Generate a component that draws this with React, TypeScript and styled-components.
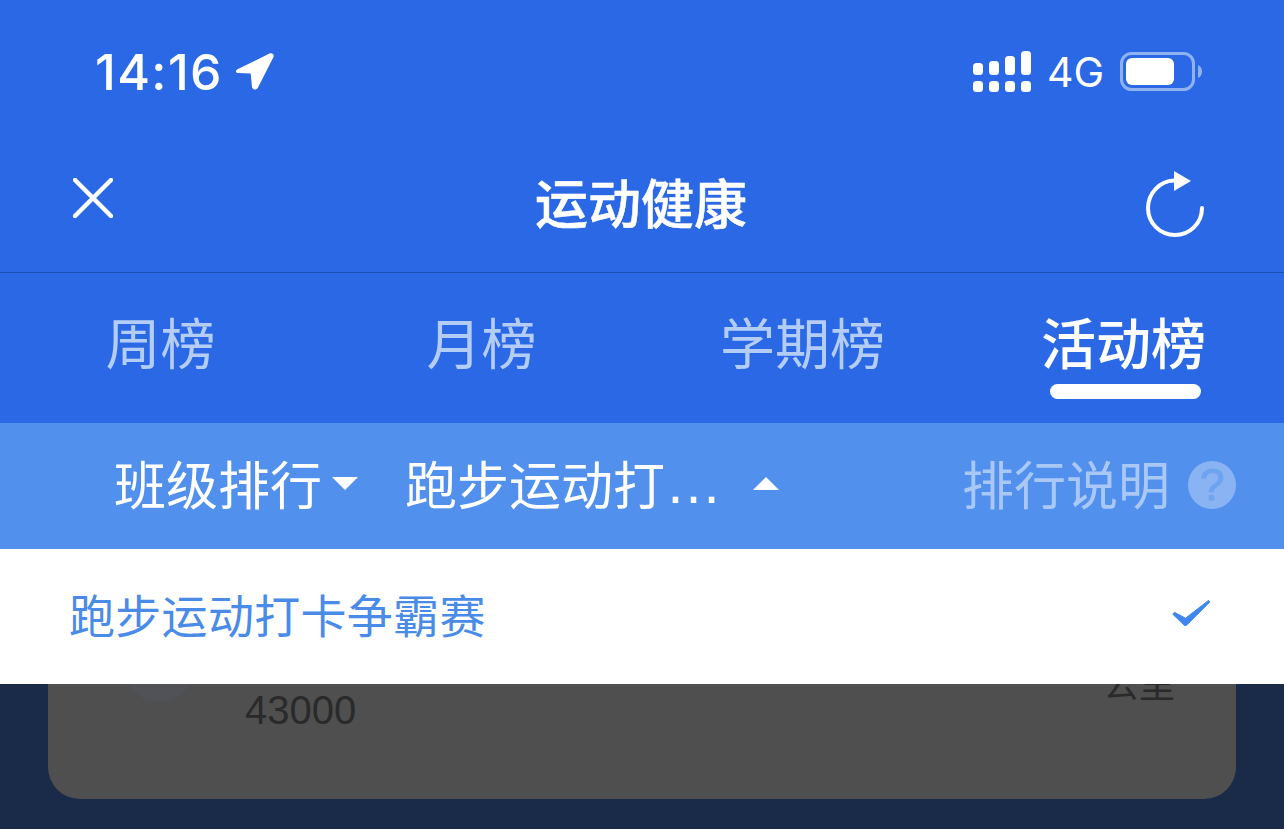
import React from 'react';
import styled, { createGlobalStyle } from 'styled-components';

const CJK = `"Noto Sans CJK SC", "Liberation Sans", sans-serif`;

const GlobalStyle = createGlobalStyle`
  html, body {
    margin: 0;
    padding: 0;
    height: 100%;
    background: #192b48;
  }
  #root {
    height: 100%;
  }
`;

const Page = styled.div`
  width: 1284px;
  height: 829px;
  display: flex;
  flex-direction: column;
  overflow: hidden;
  font-family: ${CJK};
`;

const Header = styled.header`
  background: #2b68e6;
  color: #fff;
`;

const StatusBar = styled.div`
  height: 140px;
  box-sizing: border-box;
  padding: 51px 82px 0 95px;
  display: flex;
  justify-content: space-between;
  align-items: flex-start;
`;

const StatusLeft = styled.div`
  display: flex;
  align-items: center;
  gap: 12px;
  height: 42px;
`;

const Time = styled.span`
  font-family: Inter, sans-serif;
  font-size: 50px;
  font-weight: 500;
  line-height: 42px;
  letter-spacing: 1.4px;
`;

const StatusRight = styled.div`
  display: flex;
  align-items: center;
  height: 41px;
`;

const Network = styled.span`
  font-family: Inter, sans-serif;
  font-size: 41px;
  font-weight: 400;
  line-height: 41px;
  margin: 2px 16px 0 16px;
`;

const NavBar = styled.div`
  height: 133px;
  box-sizing: border-box;
  padding: 0 80px 0 73px;
  border-bottom: 1px solid #1d4fb5;
  display: grid;
  grid-template-columns: 462px auto 1fr;
  align-items: center;
`;

const NavTitle = styled.h1`
  margin: 0 0 10px;
  font-size: 53px;
  font-weight: 500;
  line-height: 60px;
  -webkit-text-stroke: 0.5px #fff;
`;

const CloseIcon = styled.svg`
  margin-bottom: 16px;
`;

const RefreshIcon = styled.svg`
  justify-self: end;
  margin: 0 -1px 4px 0;
`;

const Tabs = styled.nav`
  height: 150px;
  display: grid;
  grid-template-columns: repeat(4, 321px);
`;

const Tab = styled.div<{ $active?: boolean }>`
  position: relative;
  text-align: center;
  padding-top: 32px;
  font-size: 55px;
  line-height: 70px;
  font-weight: ${p => (p.$active ? 500 : 400)};
  color: ${p => (p.$active ? '#ffffff' : '#b4cdf7')};
`;

const TabMark = styled.span`
  position: absolute;
  left: 87px;
  top: 111px;
  width: 151px;
  height: 15px;
  border-radius: 8px;
  background: #fff;
`;

const FilterBar = styled.div`
  height: 126px;
  box-sizing: border-box;
  background: #5290ee;
  padding: 0 48px 6px 114px;
  display: flex;
  align-items: center;
  justify-content: space-between;
  color: #fff;
  font-size: 52px;
  line-height: 70px;
`;

const FilterGroup = styled.div`
  display: flex;
  align-items: center;
  gap: 47px;
`;

const Filter = styled.div`
  display: flex;
  align-items: center;
  white-space: nowrap;
`;

const Dots = styled.span`
  font-family: "Liberation Sans", sans-serif;
  font-size: 57px;
`;

const Caret = styled.span<{ $up?: boolean; $gap: number }>`
  width: 0;
  height: 0;
  margin-left: ${p => p.$gap}px;
  margin-top: 1px;
  border-left: 13px solid transparent;
  border-right: 13px solid transparent;
  ${p => (p.$up ? 'border-bottom: 13px solid #fff;' : 'border-top: 13px solid #fff;')}
`;

const Rules = styled.div`
  display: flex;
  align-items: center;
  gap: 18px;
  color: #a9c8f6;
`;

const HelpBadge = styled.span`
  width: 48px;
  height: 48px;
  border-radius: 50%;
  background: #8ab3f4;
  color: #6ea3f0;
  font-family: "Liberation Sans", sans-serif;
  font-size: 44px;
  font-weight: 400;
  line-height: 48px;
  text-align: center;
  margin-top: 4px;
  -webkit-text-stroke: 1px #6ea3f0;
`;

const Body = styled.main`
  position: relative;
  flex: 1;
  padding: 0 48px;
`;

const Card = styled.section`
  height: 250px;
  box-sizing: border-box;
  background: #4f4f4f;
  border-radius: 0 0 32px 32px;
  display: flex;
  padding: 0 61px 0 76px;
  color: #2a2a2a;
`;

const Avatar = styled.div`
  width: 70px;
  height: 70px;
  margin-top: 83px;
  border-radius: 50%;
  background: #505258;
`;

const Steps = styled.div`
  margin: 138px 0 0 51px;
  flex: 1;
  font-family: "Liberation Sans", sans-serif;
  font-size: 40px;
  line-height: 46px;
`;

const Unit = styled.div`
  margin-top: 108px;
  font-size: 36px;
  line-height: 50px;
`;

const Dropdown = styled.div`
  position: absolute;
  left: 0;
  right: 0;
  top: 0;
  height: 135px;
  box-sizing: border-box;
  background: #fff;
  padding: 0 74px 8px 69px;
  display: flex;
  align-items: center;
  justify-content: space-between;
  color: #4a8be8;
  font-size: 46px;
  line-height: 60px;
  letter-spacing: 0.3px;
`;

const App: React.FC = () => (
  <Page>
    <GlobalStyle />
    <Header>
      <StatusBar>
        <StatusLeft>
          <Time>14:16</Time>
          <svg width="40" height="40" viewBox="0 0 40 40">
            <path
              d="M34.500 1.500 3 17C0 18.500.500 21 3 21L15.700 21.500 17 35C17.300 38 21.500 38.500 23 35.500L38.500 5C39.500 2.500 37 .300 34.500 1.500Z"
              fill="#fff"
            />
          </svg>
        </StatusLeft>
        <StatusRight>
          <svg width="58" height="41" viewBox="0 0 58 41" fill="#fff">
            <rect x="0" y="12" width="10" height="12" rx="3.5" />
            <rect x="16" y="10" width="10" height="14" rx="3.5" />
            <rect x="32" y="5" width="10" height="19" rx="3.5" />
            <rect x="48" y="0" width="10" height="24" rx="3.5" />
            <rect x="0" y="30" width="10" height="11" rx="3.5" />
            <rect x="16" y="30" width="10" height="11" rx="3.5" />
            <rect x="32" y="30" width="10" height="11" rx="3.5" />
            <rect x="48" y="30" width="10" height="11" rx="3.5" />
          </svg>
          <Network>4G</Network>
          <svg width="82" height="40" viewBox="0 0 82 40">
            <rect x="1.5" y="1.5" width="72" height="36" rx="10" fill="none" stroke="#8fb2f2" strokeWidth="3" />
            <rect x="6" y="6" width="48" height="27" rx="6" fill="#fff" />
            <path d="M78 13c2.500.800 4 3.400 4 6.500s-1.500 5.700-4 6.500Z" fill="#8fb2f2" />
          </svg>
        </StatusRight>
      </StatusBar>
      <NavBar>
        <CloseIcon width="40" height="40" viewBox="0 0 40 40" stroke="#fff" strokeWidth="4.5" strokeLinecap="round">
          <path d="M2 2 38 38M38 2 2 38" />
        </CloseIcon>
        <NavTitle>运动健康</NavTitle>
        <RefreshIcon width="60" height="68" viewBox="0 0 60 68" fill="none">
          <path d="M57 38C57 53 45 65 30 65S3 53 3 38 15 11 29 10.500" stroke="#fff" strokeWidth="4" strokeLinecap="round" />
          <path d="M29 1 46 11 29 21Z" fill="#fff" />
        </RefreshIcon>
      </NavBar>
      <Tabs>
        <Tab>周榜</Tab>
        <Tab>月榜</Tab>
        <Tab>学期榜</Tab>
        <Tab $active>
          活动榜
          <TabMark />
        </Tab>
      </Tabs>
    </Header>
    <FilterBar>
      <FilterGroup>
        <Filter>
          班级排行
          <Caret $gap={10} />
        </Filter>
        <Filter>
          跑步运动打
          <Dots>…</Dots>
          <Caret $up $gap={31} />
        </Filter>
      </FilterGroup>
      <Rules>
        排行说明
        <HelpBadge>?</HelpBadge>
      </Rules>
    </FilterBar>
    <Body>
      <Card>
        <Avatar />
        <Steps>43000</Steps>
        <Unit>公里</Unit>
      </Card>
      <Dropdown>
        跑步运动打卡争霸赛
        <svg width="38" height="28" viewBox="0 0 38 28" fill="#3f87ee">
          <path d="M2.500 13.300 0.800 15.200 12.500 26.500 14.500 26.300 37.800 3 36.600 1.400 13.500 19.200Z" strokeLinejoin="round" stroke="#3f87ee" strokeWidth="1" />
        </svg>
      </Dropdown>
    </Body>
  </Page>
);

export default App;
